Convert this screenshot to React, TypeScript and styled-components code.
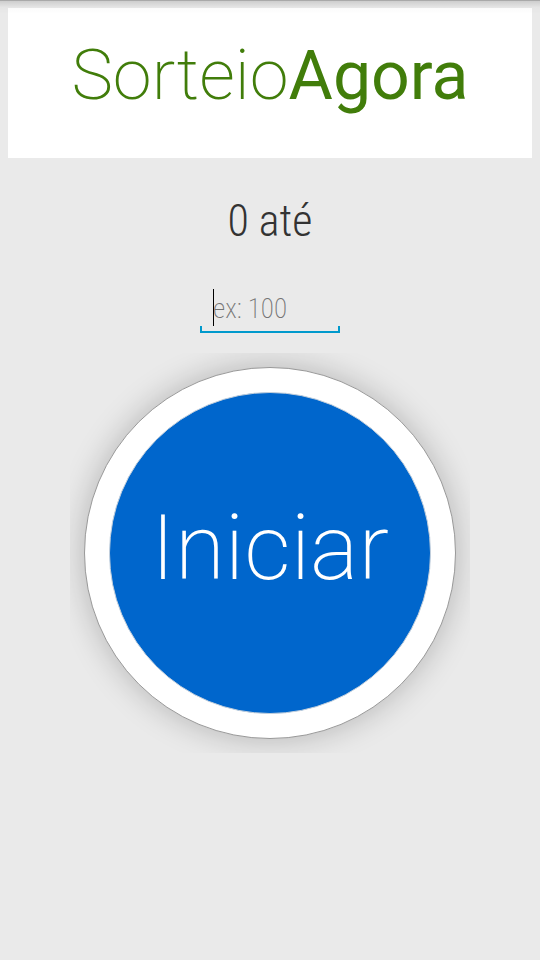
import React, { useState } from "react";
import styled, { createGlobalStyle } from "styled-components";

const GlobalStyle = createGlobalStyle`
  *, *::after { box-sizing: border-box; }
  body { margin: 0; background: #eaeaea; font-family: Roboto, sans-serif; }
`;

const Screen = styled.main`
  position: relative;
  min-height: 100vh;
  padding: 8px;
  display: flex;
  flex-direction: column;
  align-items: center;
`;

const TopShadow = styled.div`
  position: absolute;
  inset: 0 0 auto;
  height: 14px;
  border-top: 1px solid #a9a9a9;
  background: linear-gradient(rgba(0, 0, 0, 0.12), rgba(0, 0, 0, 0.02) 50%, transparent);
  pointer-events: none;
`;

const Banner = styled.header`
  align-self: stretch;
  height: 150px;
  padding-top: 27px;
  background: #fff;
  text-align: center;
`;

const Logo = styled.h1`
  margin: 0;
  font-size: 70px;
  line-height: 80px;
  font-weight: 200;
  color: #417d0a;
`;

const LogoStrong = styled.strong`
  font-size: 68px;
  font-weight: 400;
`;

const RangeLabel = styled.label`
  margin-top: 37px;
  font-family: "Roboto Condensed", Roboto, sans-serif;
  font-size: 44px;
  line-height: 52px;
  font-weight: 300;
  color: #333;
`;

const Field = styled.div`
  position: relative;
  width: 140px;
  height: 44px;
  margin-top: 42px;
  &::after {
    content: "";
    position: absolute;
    inset: auto 0 0;
    height: 7px;
    border: 2px solid #0099cc;
    border-top: 0;
    pointer-events: none;
  }
`;

const NumberInput = styled.input`
  display: block;
  width: 100%;
  height: 40px;
  padding: 0 13px;
  border: 0;
  outline: 0;
  background: transparent;
  font: 300 27px "Roboto Condensed", Roboto, sans-serif;
  color: #333;
  &::placeholder { color: #747474; opacity: 1; font-weight: 250; }
  &:placeholder-shown { caret-color: transparent; }
`;

const Caret = styled.span`
  position: absolute;
  left: 13px;
  top: 0;
  width: 1px;
  height: 37px;
  background: #000;
`;

const Stage = styled.div`
  width: 400px;
  max-width: 100%;
  aspect-ratio: 1;
  margin-top: 20px;
  padding: 14px;
  overflow: hidden;
`;

const StartButton = styled.button`
  display: flex;
  width: 100%;
  height: 100%;
  padding: 24px;
  border: 1px solid #999;
  border-radius: 50%;
  background: #fff;
  box-shadow: 0 0 32px rgba(0, 0, 0, 0.23);
  cursor: pointer;
`;

const Disc = styled.span`
  flex: 1;
  align-self: stretch;
  display: flex;
  align-items: center;
  justify-content: center;
  padding-bottom: 10px;
  border: 1px solid #c4d0dc;
  border-radius: 50%;
  background: #0066cc;
  color: #fff;
  font: 200 91px/108px Roboto, sans-serif;
`;

export default function App() {
  const [limit, setLimit] = useState("");
  return (
    <>
      <GlobalStyle />
      <Screen>
        <Banner>
          <Logo>Sorteio<LogoStrong>Agora</LogoStrong></Logo>
        </Banner>
        <RangeLabel htmlFor="limit">0 até</RangeLabel>
        <Field>
          <NumberInput
            id="limit"
            inputMode="numeric"
            placeholder="ex: 100"
            value={limit}
            onChange={(e) => setLimit(e.target.value)}
          />
          {limit === "" && <Caret />}
        </Field>
        <Stage>
          <StartButton type="button"><Disc>Iniciar</Disc></StartButton>
        </Stage>
        <TopShadow />
      </Screen>
    </>
  );
}
